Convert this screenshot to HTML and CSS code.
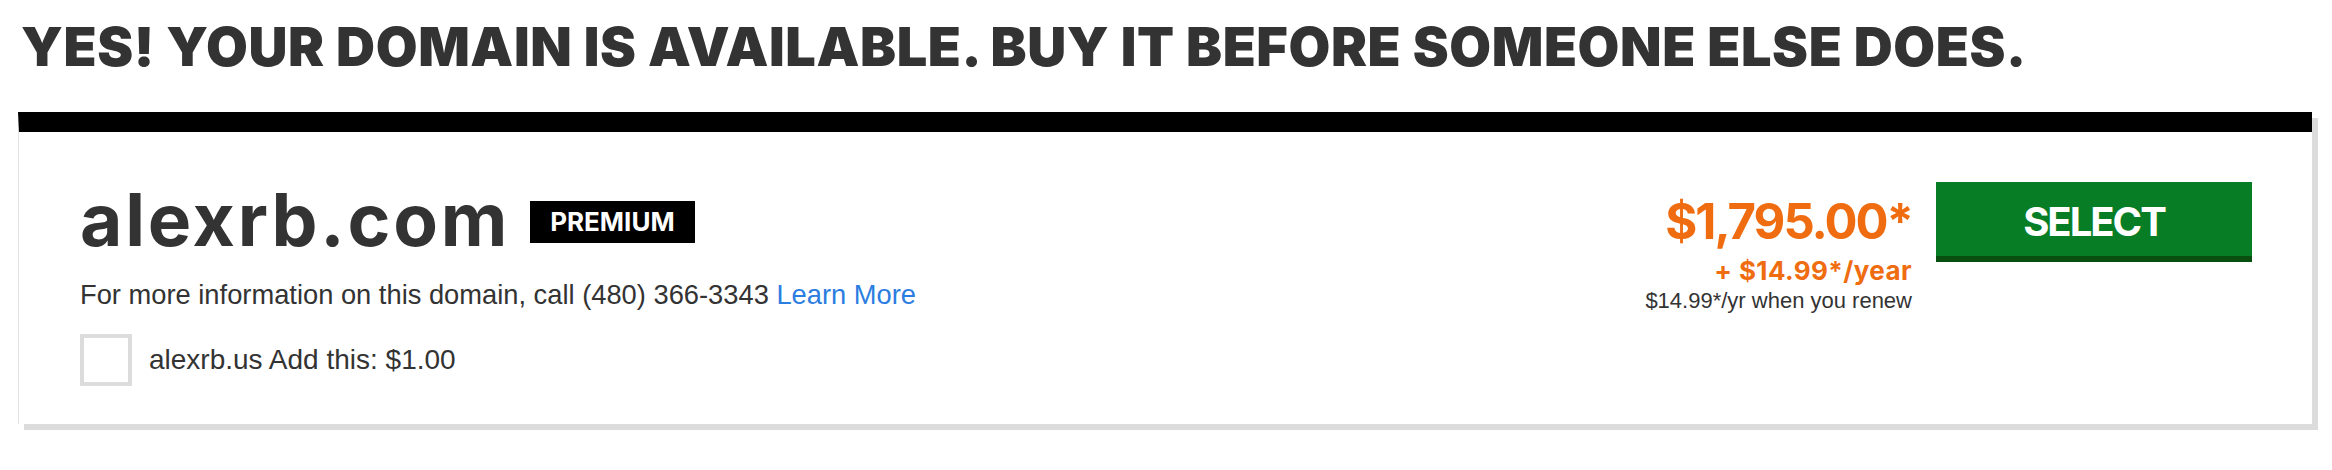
FILE: index.html
```html
<!DOCTYPE html>
<html lang="en">
<head>
<meta charset="utf-8">
<title>Domain available</title>
<link rel="stylesheet" href="styles.css">
</head>
<body>
<div class="page">
  <h1 class="headline">YES! YOUR DOMAIN IS AVAILABLE. BUY IT BEFORE SOMEONE ELSE DOES.</h1>
  <div class="card">
    <div class="info">
      <div class="domain-row">
        <span class="domain">alexrb.com</span>
        <span class="badge">PREMIUM</span>
      </div>
      <p class="note">For more information on this domain, call (480) 366-3343 <a class="learn" href="#">Learn More</a></p>
      <label class="addon">
        <span class="checkbox"></span>
        <span class="addon-text">alexrb.us Add this: $1.00</span>
      </label>
    </div>
    <div class="buy">
      <div class="pricing">
        <div class="price">$1,795.00*</div>
        <div class="yearly">+ $14.99*/year</div>
        <div class="renew">$14.99*/yr when you renew</div>
      </div>
      <button class="select" type="button">SELECT</button>
    </div>
  </div>
</div>
</body>
</html>
```
FILE: styles.css
```css
* { box-sizing: border-box; }
html, body { margin: 0; padding: 0; background: #fff; }
body { font-family: "Liberation Sans", Arial, sans-serif; color: #333; }

.page {
  padding: 14px 20px 40px 18px;
}

.headline {
  margin: 0 0 0 3px;
  font-family: Inter, "Liberation Sans", sans-serif;
  font-weight: 900;
  font-size: 54px;
  line-height: 66px;
  color: #333;
  letter-spacing: 0.6px;
}

.card {
  margin-top: 32px;
  height: 312px;
  border-top: 20px solid #000;
  border-left: 1px solid #e2e2e2;
  background: #fff;
  box-shadow: 6px 6px 0 #dcdcdc;
  display: flex;
  justify-content: space-between;
  align-items: flex-start;
  padding: 50px 60px 0 61px;
}

.domain-row {
  display: flex;
  align-items: center;
  gap: 20px;
}

.domain {
  font-family: Inter, "Liberation Sans", sans-serif;
  font-weight: 700;
  font-size: 73px;
  line-height: 76px;
  color: #333;
  letter-spacing: 2.8px;
}

.badge {
  background: #000;
  color: #fff;
  font-family: Inter, "Liberation Sans", sans-serif;
  font-weight: 700;
  font-size: 26px;
  line-height: 42px;
  height: 42px;
  padding: 0 20px;
  margin-top: 4px;
}

.note {
  margin: 22px 0 0;
  font-size: 27.3px;
  line-height: 30px;
  color: #333;
}

.learn {
  color: #2b7de1;
  text-decoration: none;
}

.addon {
  display: flex;
  align-items: center;
  gap: 17px;
  margin-top: 24px;
}

.checkbox {
  width: 52px;
  height: 52px;
  border: 4px solid #dcdcdc;
  background: #fff;
}

.addon-text {
  font-size: 28px;
  color: #333;
}

.buy {
  display: flex;
  align-items: flex-start;
  gap: 24px;
}

.pricing {
  text-align: right;
  padding-top: 12px;
}

.price {
  font-family: Inter, "Liberation Sans", sans-serif;
  font-weight: 700;
  font-size: 49px;
  line-height: 56px;
  color: #ef6c10;
  letter-spacing: -2px;
}

.yearly {
  font-family: Inter, "Liberation Sans", sans-serif;
  font-weight: 700;
  font-size: 26px;
  line-height: 42px;
  color: #ef6c10;
  letter-spacing: 0.4px;
}

.renew {
  font-size: 22px;
  line-height: 18px;
  color: #333;
}

.select {
  width: 316px;
  height: 80px;
  border: 0;
  border-bottom: 6px solid #084f10;
  background: #077d25;
  color: #fff;
  font-family: Inter, "Liberation Sans", sans-serif;
  font-weight: 700;
  font-size: 40px;
  letter-spacing: -2px;
  padding: 4px 0 0;
  cursor: pointer;
}
```
